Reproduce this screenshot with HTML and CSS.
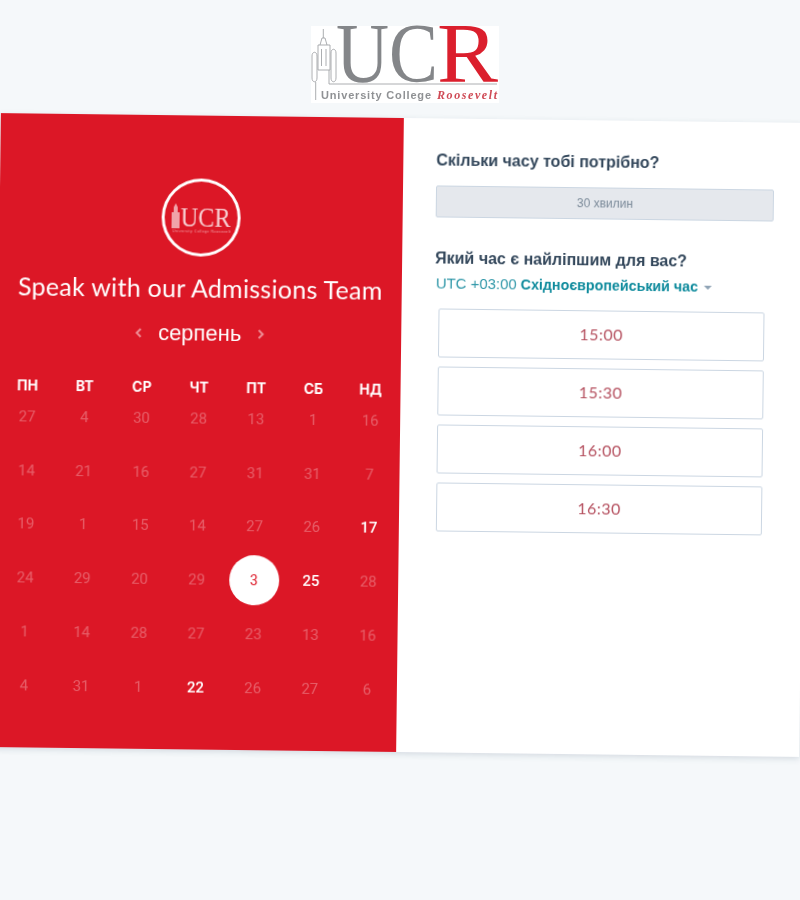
FILE: index.html
```html
<!DOCTYPE html>
<html lang="uk">
<head>
    <meta charset="UTF-8">
    <meta name="viewport" content="width=device-width, initial-scale=1.0">
    <title>Speak with our Admissions Team</title>
    <link rel="stylesheet" href="styles.css">
</head>
<body>
    <header class="top">
        <svg class="logo" width="188" height="77" viewBox="0 0 188 77">
            <rect width="188" height="77" fill="#fff"/>
            <g fill="none" stroke="#a3a5a8" stroke-width="0.9">
                <path d="M12.3 3V12M9 19L11 12H14L16 19M7 19H19V44H7ZM10.5 23V40M15 23V40"/>
                <path d="M1 30C1 25 6 25 6 30V52C6 57 1 57 1 52ZM20 27C20 22 25 22 25 27V52C25 57 20 57 20 52Z"/>
                <path d="M4.7 56V74M18 44V58H186"/>
            </g>
            <text class="logo-big" x="25" y="56" fill="#848689" textLength="102" lengthAdjust="spacingAndGlyphs">UC</text>
            <text class="logo-big" x="126" y="56" fill="#db1f2d" textLength="61" lengthAdjust="spacingAndGlyphs">R</text>
            <text class="logo-sub" x="10" y="73" fill="#8f9194" textLength="110">University College</text>
            <text class="logo-name" x="126" y="73" fill="#cf4a55" textLength="60">Roosevelt</text>
        </svg>
    </header>

    <main class="card">
        <section class="left">
            <div class="badge">
                <svg width="62" height="36" viewBox="0 0 62 36">
                    <path d="M1 14H3V9L5 5L7 9V14H9V30H1Z" fill="#f0a3a9"/>
                    <text class="badge-big" x="10" y="28" fill="#f7cfd2" textLength="50" lengthAdjust="spacingAndGlyphs">UCR</text>
                    <text class="badge-sub" x="2" y="34" fill="#f0a3a9" textLength="58">University College Roosevelt</text>
                </svg>
            </div>
            <h1 class="title">Speak with our Admissions Team</h1>
            <div class="month">
                <svg class="arrow" width="8" height="12" viewBox="0 0 8 12"><path d="M6.5 2L2.5 6L6.5 10" fill="none" stroke="currentColor" stroke-width="2"/></svg>
                <span>серпень</span>
                <svg class="arrow" width="8" height="12" viewBox="0 0 8 12"><path d="M1.5 2L5.5 6L1.5 10" fill="none" stroke="currentColor" stroke-width="2"/></svg>
            </div>
            <div class="weekdays">
                <span>ПН</span><span>ВТ</span><span>СР</span><span>ЧТ</span><span>ПТ</span><span>СБ</span><span>НД</span>
            </div>
            <div class="days">
                <span>27</span><span>4</span><span>30</span><span>28</span><span>13</span><span>1</span><span>16</span>
                <span>14</span><span>21</span><span>16</span><span>27</span><span>31</span><span>31</span><span>7</span>
                <span>19</span><span>1</span><span>15</span><span>14</span><span>27</span><span>26</span><span class="free">17</span>
                <span>24</span><span>29</span><span>20</span><span>29</span><span class="selected"><b>3</b></span><span class="free">25</span><span>28</span>
                <span>1</span><span>14</span><span>28</span><span>27</span><span>23</span><span>13</span><span>16</span>
                <span>4</span><span>31</span><span>1</span><span class="free">22</span><span>26</span><span>27</span><span>6</span>
            </div>
        </section>

        <section class="right">
            <h2 class="label">Скільки часу тобі потрібно?</h2>
            <div class="duration">30 хвилин</div>
            <h2 class="label label-time">Який час є найліпшим для вас?</h2>
            <div class="zone">UTC +03:00 <strong>Східноєвропейський час</strong><i class="caret"></i></div>
            <div class="slots">
                <button class="slot">15:00</button>
                <button class="slot">15:30</button>
                <button class="slot">16:00</button>
                <button class="slot">16:30</button>
            </div>
        </section>
    </main>
</body>
</html>
```

FILE: styles.css
```css
html, body {
    height: 100%;
    overflow: hidden;
}
body {
    margin: 0;
    background: #f5f8fa;
    font-family: "Liberation Sans", Arial, sans-serif;
}
.top {
    display: flex;
    justify-content: center;
    padding: 26px 0 0 10px;
    height: 77px;
}
.logo {
    display: block;
    overflow: visible;
    filter: blur(0.5px);
}
.logo-big {
    font-family: "Liberation Serif", serif;
    font-size: 84px;
}
.logo-sub {
    font-family: "Liberation Sans", sans-serif;
    font-size: 11px;
    font-weight: bold;
}
.logo-name {
    font-family: "Liberation Serif", serif;
    font-size: 12px;
    font-style: italic;
    font-weight: bold;
}
.card {
    display: flex;
    width: 806px;
    height: 634px;
    margin: 15px 0 0 -3px;
    background: #fff;
    box-shadow: 0 2px 6px rgba(66, 91, 118, 0.18);
    transform: rotate(0.7deg);
    filter: blur(0.25px);
}
.left {
    width: 403px;
    box-sizing: border-box;
    padding: 63px 1px 0;
    background: #dc1726;
    color: #fff;
    display: flex;
    flex-direction: column;
    align-items: center;
}
.badge {
    width: 79px;
    height: 78px;
    box-sizing: border-box;
    border: 3px solid #fff;
    border-radius: 50%;
    display: flex;
    align-items: center;
    justify-content: center;
}
.badge svg {
    overflow: visible;
    margin-bottom: 3px;
}
.badge-big {
    font-family: "Liberation Serif", serif;
    font-size: 27px;
}
.badge-sub {
    font-family: "Liberation Sans", sans-serif;
    font-size: 3.5px;
}
.title {
    margin: 16px 0 0;
    font-family: Lato, sans-serif;
    font-size: 25px;
    font-weight: 400;
    letter-spacing: 0.28px;
    line-height: 30px;
    white-space: nowrap;
}
.month {
    display: flex;
    align-items: center;
    gap: 16px;
    margin-top: 16px;
    height: 30px;
    font-size: 22px;
}
.arrow {
    color: rgba(255, 255, 255, 0.5);
}
.weekdays, .days {
    display: grid;
    grid-template-columns: repeat(7, 57.2px);
    text-align: center;
}
.weekdays {
    margin-top: 29px;
    line-height: 20px;
    font-family: Inter, sans-serif;
    font-size: 14px;
    font-weight: 700;
}
.days {
    margin-top: -6px;
    grid-auto-rows: 53.8px;
    font-family: Roboto, sans-serif;
    font-size: 15px;
    color: rgba(255, 255, 255, 0.3);
}
.days span {
    display: flex;
    align-items: center;
    justify-content: center;
}
.days .free {
    color: #fff;
    font-weight: 500;
}
.days .selected b {
    width: 50px;
    height: 50px;
    border-radius: 50%;
    background: #fff;
    color: #dc1726;
    font-size: 14px;
    font-weight: 400;
    display: flex;
    align-items: center;
    justify-content: center;
}
.right {
    width: 403px;
    box-sizing: border-box;
    padding: 31px 32px 0 33px;
    color: #33475b;
}
.label {
    margin: 0;
    font-size: 16px;
    font-weight: bold;
    line-height: 22px;
}
.duration {
    height: 32px;
    margin-top: 14px;
    box-sizing: border-box;
    background: #e5e8ed;
    border: 1px solid #cbd6e2;
    border-radius: 2px;
    color: #7c8b9a;
    font-size: 12px;
    line-height: 30px;
    text-align: center;
}
.label-time {
    margin-top: 30px;
}
.zone {
    margin: 3px 0 0 1px;
    color: #2f97a8;
    font-size: 14.9px;
    line-height: 22px;
    white-space: nowrap;
}
.zone strong {
    color: #0d8a9c;
    font-size: 14.25px;
}
.caret {
    display: inline-block;
    margin: 0 0 2px 6px;
    border: 4px solid transparent;
    border-top-color: #8fa3b5;
    border-bottom: 0;
}
.slots {
    display: flex;
    flex-direction: column;
    gap: 9px;
    width: 326px;
    margin: 14px 0 0 4px;
}
.slot {
    height: 49px;
    background: #fff;
    border: 1px solid #cbd6e2;
    border-radius: 2px;
    color: #b5505f;
    font-family: Lato, sans-serif;
    font-size: 16px;
    letter-spacing: 0.5px;
    padding-bottom: 3px;
}
```
